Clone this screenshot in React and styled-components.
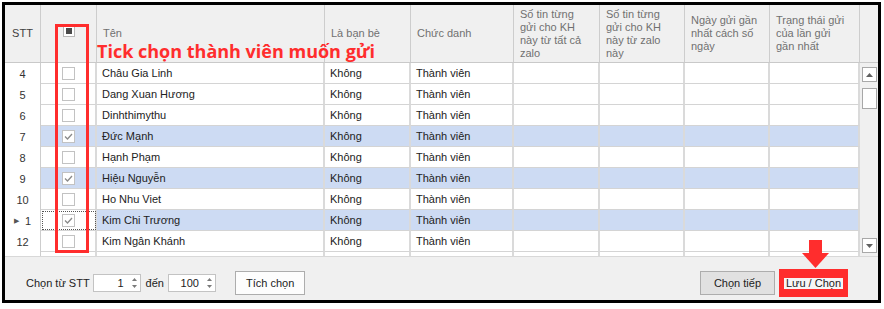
import React from "react";
import styled, { createGlobalStyle } from "styled-components";

const COLS = "36px 56px 228px 86px 103px 86px 85px 85px 90px";

const rows = [
  { stt: "4", name: "Châu Gia Linh" },
  { stt: "5", name: "Dang Xuan Hương" },
  { stt: "6", name: "Dinhthimythu" },
  { stt: "7", name: "Đức Mạnh", checked: true },
  { stt: "8", name: "Hạnh Phạm" },
  { stt: "9", name: "Hiệu Nguyễn", checked: true },
  { stt: "10", name: "Ho Nhu Viet" },
  { stt: "1", name: "Kim Chi Trương", checked: true, current: true },
  { stt: "12", name: "Kim Ngân Khánh" },
  { stt: "", name: "" },
];

// header captions, already split the way the grid wraps them
const headers = [
  ["Là bạn bè"],
  ["Chức danh"],
  ["Số tin từng", "gửi cho KH", "này từ tất cả", "zalo"],
  ["Số tin từng", "gửi cho KH", "này từ zalo", "này"],
  ["Ngày gửi gần", "nhất cách số", "ngày"],
  ["Trạng thái gửi", "của lần gửi", "gần nhất"],
];

const Check = ({ checked }) => (
  <CheckBox>
    {checked && (
      <svg width="11" height="11" viewBox="0 0 11 11">
        <polyline points="2,5.5 4.5,8 9,3" fill="none" stroke="#8a8a8a" strokeWidth="1.3" />
      </svg>
    )}
  </CheckBox>
);

const Spin = ({ value }) => (
  <SpinBox>
    <SpinValue>{value}</SpinValue>
    <SpinArrows>
      <svg width="7" height="12" viewBox="0 0 7 12">
        <polygon points="3.5,1 6,4 1,4" fill="#7a7a7a" />
        <polygon points="1,8 6,8 3.5,11" fill="#7a7a7a" />
      </svg>
    </SpinArrows>
  </SpinBox>
);

export default function App() {
  return (
    <>
      <GlobalStyle />
      <Frame>
        <Header>
          <HeadCell $center>STT</HeadCell>
          <HeadCell $center>
            <HeadCheck>
              <span />
            </HeadCheck>
          </HeadCell>
          <HeadCell>Tên</HeadCell>
          {headers.map((h) => (
            <HeadCell key={h.join(" ")}>
              <div>
                {h.map((line) => (
                  <div key={line}>{line}</div>
                ))}
              </div>
            </HeadCell>
          ))}
          <HeadCell $last />
        </Header>

        <Body>
          <Rows>
            {rows.map((r, i) => (
              <Row key={i} $selected={r.checked}>
                <SttCell>
                  {r.current && <Indicator>▶</Indicator>}
                  {r.stt}
                </SttCell>
                <CheckCell $focus={r.current}>{r.name && <Check checked={r.checked} />}</CheckCell>
                <Cell>{r.name}</Cell>
                <Cell>{r.name && "Không"}</Cell>
                <Cell>{r.name && "Thành viên"}</Cell>
                <Cell />
                <Cell />
                <Cell />
                <Cell />
              </Row>
            ))}
          </Rows>
          <ScrollBar>
            <ScrollButton>
              <svg width="7" height="4" viewBox="0 0 7 4">
                <polygon points="3.5,0 7,4 0,4" fill="#606060" />
              </svg>
            </ScrollButton>
            <Thumb />
            <ScrollButton $bottom>
              <svg width="7" height="4" viewBox="0 0 7 4">
                <polygon points="0,0 7,0 3.5,4" fill="#606060" />
              </svg>
            </ScrollButton>
          </ScrollBar>
        </Body>

        <Footer>
          <Label>Chọn từ STT</Label>
          <Spin value="1" />
          <Label $gap>đến</Label>
          <Spin value="100" />
          <Button $light $push $pad={10}>Tích chọn</Button>
          <Spacer />
          <Button $pad={13}>Chọn tiếp</Button>
          <SaveButton>
            <span>Lưu / Chọn</span>
          </SaveButton>
        </Footer>

        <ColumnMark />
        <Hint>Tick chọn thành viên muốn gửi</Hint>
        <Arrow>
          <svg width="28" height="28" viewBox="0 0 28 28">
            <rect x="7" y="0" width="13" height="14" fill="#ff2d2d" />
            <polygon points="0,13 27,13 13.5,28" fill="#ff2d2d" />
          </svg>
        </Arrow>
      </Frame>
    </>
  );
}

const GlobalStyle = createGlobalStyle`
  body {
    margin: 0;
    background: #ffffff;
    font-family: "Liberation Sans", Arial, sans-serif;
  }
`;

const Frame = styled.div`
  position: relative;
  margin: 2px 0 0 2px;
  width: 879px;
  height: 301px;
  box-sizing: border-box;
  border: 3px solid #000;
  background: #f0f0f0;
  display: flex;
  flex-direction: column;
  overflow: hidden;
`;

const Header = styled.div`
  display: grid;
  grid-template-columns: ${COLS} 1fr;
  height: 58px;
  background: #f0f0f0;
  border-bottom: 1px solid #c9c9c9;
  box-sizing: border-box;
`;

const HeadCell = styled.div`
  display: flex;
  align-items: center;
  justify-content: ${(p) => (p.$center ? "center" : "flex-start")};
  padding: 0 ${(p) => (p.$center ? "0" : "6px")};
  border-right: ${(p) => (p.$last ? "none" : "1px solid #cdcdcd")};
  font-size: 11px;
  line-height: 13px;
  color: ${(p) => (p.$center ? "#404040" : "#707070")};
  white-space: nowrap;
`;

const HeadCheck = styled.div`
  width: 12px;
  height: 12px;
  box-sizing: border-box;
  border: 1px solid #b8b8b8;
  background: #fff;
  display: flex;
  align-items: center;
  justify-content: center;
  margin-top: -5px;

  span {
    width: 6px;
    height: 6px;
    background: #4a4a4a;
  }
`;

const Body = styled.div`
  display: flex;
  height: 193px;
  background: #fff;
  overflow: hidden;
`;

const Rows = styled.div`
  width: 855px;
  display: flex;
  flex-direction: column;
`;

const Row = styled.div`
  display: grid;
  grid-template-columns: ${COLS};
  flex: 0 0 21px;
  font-size: 11px;
  color: #222;
  background: ${(p) => (p.$selected ? "#cddbf3" : "#fff")};
`;

const Cell = styled.div`
  display: flex;
  align-items: center;
  padding: 0 5px;
  border-right: 2px solid #dadada;
  border-bottom: 1px solid #d4d4d4;
  box-sizing: border-box;
  white-space: nowrap;
`;

const SttCell = styled.div`
  display: flex;
  align-items: center;
  justify-content: center;
  gap: 6px;
  background: #fff;
  border-right: 1px solid #cdcdcd;
  color: #333;
`;

const Indicator = styled.span`
  font-size: 7px;
  color: #555;
`;

const CheckCell = styled(Cell)`
  justify-content: center;
  outline: ${(p) => (p.$focus ? "1px dotted #555" : "none")};
  outline-offset: -2px;
  background: ${(p) => (p.$focus ? "#fff" : "transparent")};
`;

const CheckBox = styled.div`
  width: 13px;
  height: 13px;
  box-sizing: border-box;
  border: 1px solid #c2c2c2;
  background: #fff;
  display: flex;
  align-items: center;
  justify-content: center;
`;

const ScrollBar = styled.div`
  width: 18px;
  background: #f0f0f0;
  display: flex;
  flex-direction: column;
  align-items: center;
  padding: 1px 0 0;
  box-sizing: border-box;
`;

const ScrollButton = styled.div`
  width: 15px;
  height: 15px;
  box-sizing: border-box;
  border: 1px solid #a8a8a8;
  background: #fff;
  display: flex;
  align-items: center;
  justify-content: center;
  margin-top: ${(p) => (p.$bottom ? "auto" : "3px")};
  margin-bottom: ${(p) => (p.$bottom ? "3px" : "0")};
`;

const Thumb = styled.div`
  width: 15px;
  height: 21px;
  box-sizing: border-box;
  border: 1px solid #a8a8a8;
  background: #fff;
  margin-top: 6px;
`;

const Footer = styled.div`
  flex: 1;
  display: flex;
  align-items: center;
  padding: 9px 30px 0 21px;
  font-size: 11px;
  color: #222;
  border-top: 1px solid #d8d8d8;
`;

const Label = styled.span`
  margin: ${(p) => (p.$gap ? "0 4px 0 5px" : "0 3px 0 0")};
`;

const SpinBox = styled.div`
  width: 48px;
  height: 18px;
  box-sizing: border-box;
  border: 1px solid #c3c3c3;
  background: #fff;
  display: flex;
  align-items: center;
`;

const SpinValue = styled.span`
  flex: 1;
  text-align: right;
  padding-right: 6px;
`;

const SpinArrows = styled.span`
  width: 10px;
  display: flex;
  justify-content: center;
`;

const Button = styled.div`
  height: 24px;
  padding: 0 ${(p) => p.$pad}px;
  margin-left: ${(p) => (p.$push ? "19px" : "0")};
  box-sizing: border-box;
  display: flex;
  align-items: center;
  border: 1px solid #adadad;
  background: ${(p) => (p.$light ? "#fdfdfd" : "#e1e1e1")};
  color: #222;
`;

const Spacer = styled.div`
  flex: 1;
`;

const SaveButton = styled.div`
  margin-left: 4px;
  width: 69px;
  height: 28px;
  box-sizing: border-box;
  background: #ff2d2d;
  display: flex;
  align-items: center;
  justify-content: center;

  span {
    background: #f6f6f6;
    padding: 0 2px;
    line-height: 11px;
    color: #222;
  }
`;

const ColumnMark = styled.div`
  position: absolute;
  left: 50px;
  top: 19px;
  width: 34px;
  height: 229px;
  box-sizing: border-box;
  border: 3px solid #ff2d2d;
`;

const Hint = styled.div`
  position: absolute;
  left: 92px;
  top: 34px;
  font-family: "Open Sans", sans-serif;
  font-weight: 700;
  font-size: 18px;
  color: #ff2d2d;
  white-space: nowrap;
`;

const Arrow = styled.div`
  position: absolute;
  left: 797px;
  top: 235px;
  line-height: 0;
`;
